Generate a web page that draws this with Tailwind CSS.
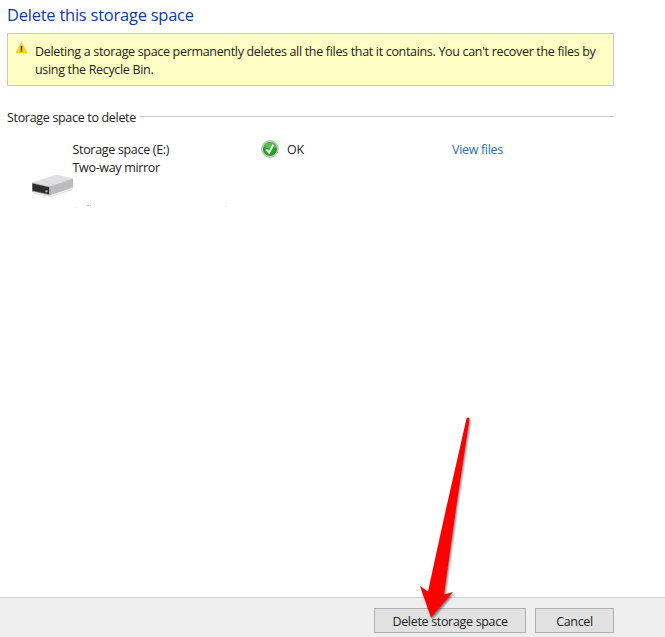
<!DOCTYPE html>
<html lang="en">
<head>
<meta charset="utf-8">
<title>Delete this storage space</title>
<script src="https://cdn.jsdelivr.net/npm/@tailwindcss/browser@4"></script>
</head>
<body class="bg-white">
<div class="relative flex h-[637px] w-[665px] flex-col overflow-hidden bg-white font-['Open_Sans','Noto_Sans',sans-serif] text-[12.5px] leading-[18px] tracking-[-0.32px] text-[#222]">
  <main class="flex-1 pl-[7px] pr-[51px] pt-[3px]">
    <h1 class="h-[30px] whitespace-nowrap text-[16.5px] leading-[23px] tracking-[-0.24px] text-[#123c98]">Delete this storage space</h1>
    <section class="flex h-[53px] border border-[#c8c8c8] bg-[#ffffc5] pl-[7px] pt-[9px]">
      <svg class="-mt-px h-3 w-[13px] shrink-0" viewBox="0 0 13 12"><path d="M6.5 .5 12 11H1Z" fill="#fccf22" stroke="#f2c52a" stroke-width=".6" stroke-linejoin="round"/><path d="M5.8 3.8h1.4V8.6H5.8Z" fill="#33301c"/><path d="M5.8 9.1h1.4v1H5.8Z" fill="#6b5b1c"/></svg>
      <p class="ml-[7px] whitespace-nowrap">Deleting a storage space permanently deletes all the files that it contains. You can't recover the files by<br>using the Recycle Bin.</p>
    </section>
    <div class="mt-[23px] flex h-[18px]">
      <h2 class="w-[130px] whitespace-nowrap">Storage space to delete</h2>
      <div class="ml-[2px] mt-[7px] h-px flex-1 bg-[#c9c9c9]"></div>
    </div>
    <section class="mt-[14px] flex">
      <svg class="ml-6 mt-[32px] h-6 w-[42px] shrink-0" viewBox="0 0 42 24"><path d="M2 20 20 23.5 42 16" fill="none" stroke="#ddd" stroke-width="1"/><path d="M1 9.5 25 2Q26 1.8 27 2L42 5.5 19 13.5Z" fill="#dfdfe2"/><path d="M18.5 13.5 42 5.5V14.5L19 22.5Z" fill="#bcbcbf"/><path d="M1 9.5 19 13.5V22.5L1 18.5Z" fill="#a5a5a7"/><path d="M1.5 10.5 18 14.2V21.2L1.5 17.7Z" fill="#2b2d2c"/><circle cx="15.5" cy="18.3" r="1.2" fill="#63d33c"/></svg>
      <p class="-ml-px w-[190px] whitespace-nowrap pl-[0.5px]">Storage space (E:)<br>Two-way mirror</p>
      <svg class="-ml-px -mt-px h-[18px] w-[18px] shrink-0" viewBox="0 0 18 18"><circle cx="9" cy="9" r="8.3" fill="#d3dbd2" stroke="#9aa49a" stroke-width=".8"/><circle cx="9" cy="9" r="7" fill="#279e27"/><path d="M3 7a6.3 6.3 0 0 1 12 0q-4 3-12 0" fill="#57be4d"/><path d="M5.2 9.4 8 12.5 12.3 4.7" fill="none" stroke="#fff" stroke-width="2"/></svg>
      <span class="ml-2 w-[165px] tracking-[-0.2px]">OK</span>
      <a class="whitespace-nowrap text-[#2b6cb5]">View files</a>
    </section>
    <svg class="ml-[66px] mt-2 h-1 w-[160px]" viewBox="0 0 160 4"><path d="M1 3l3-1M152 1.5h2" stroke="#eee" stroke-width=".8"/><path d="M14 .5h2M17 .5h1" stroke="#c4c4c4"/></svg>
  </main>
  <footer class="flex h-10 justify-end gap-[9px] border-t border-[#d2d2d2] bg-[#efefef] pr-[51px] pt-[10px]">
    <button class="h-[25px] w-[152px] whitespace-nowrap border border-[#b1b1b1] bg-[#e1e1e1] pt-[2px] leading-[21px]">Delete storage space</button>
    <button class="h-[25px] w-[79px] border border-[#b1b1b1] bg-[#e1e1e1] pt-[2px] leading-[21px]">Cancel</button>
  </footer>
  <svg class="pointer-events-none absolute left-[410px] top-[410px] h-[215px] w-[70px] drop-shadow-[1px_2px_1px_rgba(0,0,0,.5)]" viewBox="410 410 70 215"><path d="M466.5 418.5Q468 416.5 469.5 418.5L456 508 444 594.5 453 592 431 617.5 420 586 428 591.5 444 518Z" fill="#f00"/></svg>
</div>
</body>
</html>
